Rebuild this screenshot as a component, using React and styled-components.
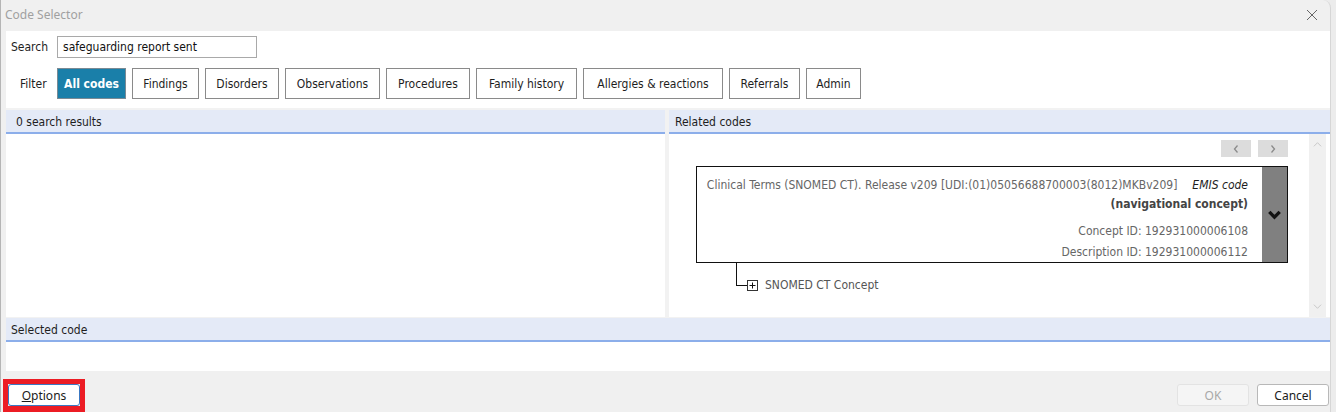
import React from 'react';
import styled, { createGlobalStyle } from 'styled-components';

const GlobalStyle = createGlobalStyle`
  html, body {
    margin: 0;
    padding: 0;
    background: #ececec;
    overflow: hidden;
  }
`;

const uiFont = `"DejaVu Sans", "Liberation Sans", sans-serif`;

const Window = styled.div`
  width: 1331px;
  height: 412px;
  box-sizing: border-box;
  background: #f0f0f0;
  border-left: 1px solid #b5b5b5;
  border-right: 1px solid #d6d6d6;
  border-top-right-radius: 8px;
  display: flex;
  flex-direction: column;
  overflow: hidden;
  font-family: ${uiFont};
  font-stretch: condensed;
  font-size: 12px;
  color: #1e1e1e;
`;

const TitleBar = styled.div`
  height: 31px;
  flex: none;
  display: flex;
  align-items: center;
  justify-content: space-between;
  padding: 0 12px 2px 4px;
  box-sizing: border-box;
  font-family: "Noto Sans", "Open Sans", sans-serif;
  font-stretch: normal;
  font-size: 12px;
  color: #a0a0a0;
`;

const CloseX = styled.svg`
  width: 12px;
  height: 12px;
`;

const Content = styled.div`
  margin-left: 5px;
  width: 1324px;
  background: #fff;
  display: flex;
  flex-direction: column;
  height: 340px;
  flex: none;
`;

const TopSection = styled.div`
  height: 77px;
  padding: 5px 0 0 5px;
  box-sizing: border-box;
  display: flex;
  flex-direction: column;
  gap: 10px;
`;

const FieldRow = styled.div`
  display: flex;
  align-items: center;
`;

const Label = styled.span`
  width: ${p => p.w}px;
  padding-left: ${p => p.indent || 0}px;
  box-sizing: border-box;
  flex: none;
`;

const SearchInput = styled.div`
  width: 200px;
  height: 22px;
  box-sizing: border-box;
  border: 1px solid #a9a9a9;
  padding: 0 5px;
  display: flex;
  align-items: center;
  font-size: 12px;
  color: #111;
`;

const FilterButtons = styled.div`
  display: flex;
  gap: 6px;
`;

const FilterButton = styled.button`
  width: ${p => p.w}px;
  height: 31px;
  box-sizing: border-box;
  border: 1px solid ${p => (p.active ? '#7a8a94' : '#8a8a8a')};
  background: ${p => (p.active ? '#1a7fa9' : '#fff')};
  color: ${p => (p.active ? '#fff' : '#1e1e1e')};
  font-family: ${uiFont};
  font-stretch: condensed;
  font-size: 12px;
  font-weight: ${p => (p.active ? 700 : 400)};
  padding: 0;
  white-space: nowrap;
`;

const PanelsArea = styled.div`
  background: #f2f2f2;
  padding-top: 2px;
  display: flex;
  flex-direction: column;
  gap: 1px;
  flex: 1;
`;

const PanelRow = styled.div`
  display: flex;
  gap: 4px;
  height: 207px;
`;

const Panel = styled.div`
  background: #fff;
  display: flex;
  flex-direction: column;
  min-width: 0;
  width: ${p => (p.w ? `${p.w}px` : 'auto')};
  flex: ${p => (p.w ? 'none' : '1')};
`;

const PanelHeader = styled.div`
  height: 24px;
  flex: none;
  box-sizing: border-box;
  background: #e4eaf7;
  border-bottom: 2px solid #8caeea;
  display: flex;
  align-items: center;
  padding-left: ${p => p.indent}px;
  padding-top: 1px;
`;

const PanelBody = styled.div`
  flex: 1;
  display: flex;
  min-height: 0;
`;

const RelatedMain = styled.div`
  flex: 1;
  min-width: 0;
  padding: 6px 21px 0 27px;
  display: flex;
  flex-direction: column;
`;

const NavRow = styled.div`
  display: flex;
  justify-content: flex-end;
  gap: 7px;
`;

const NavButton = styled.div`
  width: 30px;
  height: 17px;
  background: #dcdcdc;
  display: flex;
  align-items: center;
  justify-content: center;
`;

const ConceptCard = styled.div`
  margin-top: 9px;
  height: 97px;
  box-sizing: border-box;
  border: 1px solid #111;
  display: flex;
`;

const CardText = styled.div`
  flex: 1;
  min-width: 0;
  padding: 10px 14px 0 10px;
  display: flex;
  flex-direction: column;
  align-items: flex-end;
  color: #666;
`;

const CardLine = styled.div`
  margin-top: ${p => p.gap || 0}px;
  line-height: 16px;
  white-space: nowrap;
  font-weight: ${p => (p.bold ? 700 : 400)};
  color: ${p => (p.bold ? '#444' : 'inherit')};
`;

const Emis = styled.em`
  color: #1e1e1e;
  margin-left: 15px;
`;

const CardSide = styled.div`
  width: 25px;
  flex: none;
  background: #808080;
  display: flex;
  align-items: center;
  justify-content: center;
`;

const TreeRow = styled.div`
  display: flex;
  align-items: flex-start;
  color: #555;
`;

const Elbow = styled.div`
  margin-left: 40px;
  width: 10px;
  height: 22px;
  border-left: 1px solid #111;
  border-bottom: 1px solid #111;
  flex: none;
`;

const PlusBox = styled.div`
  margin-top: 17px;
  width: 11px;
  height: 11px;
  box-sizing: border-box;
  border: 1px solid #333;
  display: flex;
  align-items: center;
  justify-content: center;
  flex: none;
`;

const TreeLabel = styled.span`
  margin: 15px 0 0 7px;
`;

const ScrollTrack = styled.div`
  width: 17px;
  flex: none;
  margin-right: 4px;
  background: #f0f0f0;
  display: flex;
  flex-direction: column;
  justify-content: space-between;
  align-items: center;
  padding: 6px 0;
  box-sizing: border-box;
`;

const SelectedPanel = styled.div`
  background: #fff;
  display: flex;
  flex-direction: column;
  flex: 1;
`;

const Footer = styled.div`
  flex: 1;
  display: flex;
  align-items: flex-end;
  justify-content: space-between;
  padding: 0 1px 0 2px;
`;

const Highlight = styled.div`
  border: 5px solid #ec1c24;
  border-bottom-width: 6px;
  display: flex;
`;

const DialogButton = styled.button`
  width: ${p => p.w}px;
  height: 22px;
  box-sizing: border-box;
  border-radius: 3px;
  border: 1px solid ${p => (p.disabled ? '#e3e3e3' : p.focused ? '#3a78c2' : '#b8b8b8')};
  background: ${p => (p.disabled ? '#f5f5f5' : '#fff')};
  color: ${p => (p.disabled ? '#a8a8a8' : '#1b1b1b')};
  font-family: "Noto Sans", "Open Sans", sans-serif;
  font-size: 12px;
  padding: 0;
`;

const RightButtons = styled.div`
  display: flex;
  gap: 8px;
  margin-bottom: 6px;
`;

const filters = [
  { label: 'All codes', w: 69, active: true },
  { label: 'Findings', w: 67 },
  { label: 'Disorders', w: 74 },
  { label: 'Observations', w: 95 },
  { label: 'Procedures', w: 84 },
  { label: 'Family history', w: 101 },
  { label: 'Allergies & reactions', w: 140 },
  { label: 'Referrals', w: 71 },
  { label: 'Admin', w: 55 },
];

const Chevron = ({ dir = 'down', color = '#111', size = 10, width = 3 }) => {
  const pts = {
    down: '1,3 5,7 9,3',
    up: '1,7 5,3 9,7',
    left: '6.5,1.5 3.5,5 6.5,8.5',
    right: '3.5,1.5 6.5,5 3.5,8.5',
  }[dir];
  return (
    <svg width={size} height={size} viewBox="0 0 10 10">
      <polyline points={pts} fill="none" stroke={color} strokeWidth={width} />
    </svg>
  );
};

const PlusIcon = () => (
  <svg width="9" height="9" viewBox="0 0 9 9">
    <path d="M1.5 4.5H7.5M4.5 1.5V7.5" stroke="#111" strokeWidth="1" />
  </svg>
);

export default function App() {
  return (
    <>
      <GlobalStyle />
      <Window>
        <TitleBar>
          <span>Code Selector</span>
          <CloseX viewBox="0 0 12 12">
            <path d="M1 1L11 11M11 1L1 11" stroke="#666" strokeWidth="1" />
          </CloseX>
        </TitleBar>
        <Content>
          <TopSection>
            <FieldRow>
              <Label w={46}>Search</Label>
              <SearchInput>safeguarding report sent</SearchInput>
            </FieldRow>
            <FieldRow>
              <Label w={46} indent={9}>Filter</Label>
              <FilterButtons>
                {filters.map(f => (
                  <FilterButton key={f.label} w={f.w} active={f.active}>
                    {f.label}
                  </FilterButton>
                ))}
              </FilterButtons>
            </FieldRow>
          </TopSection>
          <PanelsArea>
            <PanelRow>
              <Panel w={659}>
                <PanelHeader indent={10}>0 search results</PanelHeader>
                <PanelBody />
              </Panel>
              <Panel>
                <PanelHeader indent={6}>Related codes</PanelHeader>
                <PanelBody>
                  <RelatedMain>
                    <NavRow>
                      <NavButton><Chevron dir="left" color="#8a8a8a" width={1.3} /></NavButton>
                      <NavButton><Chevron dir="right" color="#8a8a8a" width={1.3} /></NavButton>
                    </NavRow>
                    <ConceptCard>
                      <CardText>
                        <CardLine>
                          Clinical Terms (SNOMED CT). Release v209 [UDI:(01)05056688700003(8012)MKBv209]
                          <Emis>EMIS code</Emis>
                        </CardLine>
                        <CardLine bold gap={3}>(navigational concept)</CardLine>
                        <CardLine gap={11}>Concept ID: 192931000006108</CardLine>
                        <CardLine gap={5}>Description ID: 192931000006112</CardLine>
                      </CardText>
                      <CardSide>
                        <Chevron dir="down" size={13} width={2.6} />
                      </CardSide>
                    </ConceptCard>
                    <TreeRow>
                      <Elbow />
                      <PlusBox><PlusIcon /></PlusBox>
                      <TreeLabel>SNOMED CT Concept</TreeLabel>
                    </TreeRow>
                  </RelatedMain>
                  <ScrollTrack>
                    <Chevron dir="up" color="#c4c4c4" size={9} width={1} />
                    <Chevron dir="down" color="#c4c4c4" size={9} width={1} />
                  </ScrollTrack>
                </PanelBody>
              </Panel>
            </PanelRow>
            <SelectedPanel>
              <PanelHeader indent={5}>Selected code</PanelHeader>
            </SelectedPanel>
          </PanelsArea>
        </Content>
        <Footer>
          <Highlight>
            <DialogButton w={72} focused>
              <u>O</u>ptions
            </DialogButton>
          </Highlight>
          <RightButtons>
            <DialogButton w={72} disabled>OK</DialogButton>
            <DialogButton w={72}>Cancel</DialogButton>
          </RightButtons>
        </Footer>
      </Window>
    </>
  );
}
